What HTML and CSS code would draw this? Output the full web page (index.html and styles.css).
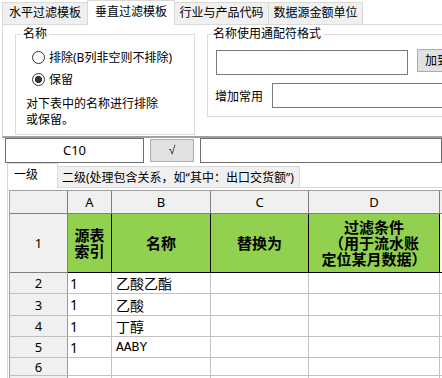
FILE: index.html
```html
<!DOCTYPE html>
<html lang="zh-CN">
<head>
<meta charset="utf-8">
<title>垂直过滤模板</title>
<link rel="stylesheet" href="styles.css">
</head>
<body>
<div class="app">
  <div class="tabstrip">
    <div class="tab t1">水平过滤模板</div>
    <div class="tab t2 active">垂直过滤模板</div>
    <div class="tab t3">行业与产品代码</div>
    <div class="tab t4">数据源金额单位</div>
  </div>
  <div class="panel">
    <fieldset class="grp grp-name">
      <legend class="lg1">名称</legend>
      <div class="radios">
        <div class="radio"><span class="rb"></span>排除(B列非空则不排除)</div>
        <div class="radio"><span class="rb on"></span>保留</div>
      </div>
      <p class="note">对下表中的名称进行排除<br>或保留。</p>
    </fieldset>
    <fieldset class="grp grp-wild">
      <legend class="lg2">名称使用通配符格式</legend>
      <div class="wrow1"><div class="input in1"></div><div class="btn addbtn">加到常用</div></div>
      <div class="wrow2"><span class="lbl">增加常用</span><div class="input in2"></div></div>
    </fieldset>
  </div>
  <div class="fbar">
    <div class="namebox">C10</div>
    <div class="btn okbtn">√</div>
    <div class="formula"></div>
  </div>
  <div class="stabs">
    <div class="stab active">一级</div>
    <div class="stab s2">二级(处理包含关系，如“其中：出口交货额”)</div>
  </div>
  <div class="sheet-body">
    <div class="grid">
      <div class="c ch"></div><div class="c ch">A</div><div class="c ch">B</div><div class="c ch">C</div><div class="c ch">D</div><div class="c ch"></div>
      <div class="c rh rh1">1</div><div class="c g">源表<br>索引</div><div class="c g">名称</div><div class="c g">替换为</div><div class="c g">过滤条件<br>（用于流水账<br>定位某月数据）</div><div class="c ge"></div>
      <div class="c rh">2</div><div class="c">1</div><div class="c b">乙酸乙酯</div><div class="c"></div><div class="c"></div><div class="c"></div>
      <div class="c rh">3</div><div class="c">1</div><div class="c b">乙酸</div><div class="c"></div><div class="c"></div><div class="c"></div>
      <div class="c rh">4</div><div class="c">1</div><div class="c b">丁醇</div><div class="c"></div><div class="c"></div><div class="c"></div>
      <div class="c rh">5</div><div class="c">1</div><div class="c b mono">AABY</div><div class="c"></div><div class="c"></div><div class="c"></div>
      <div class="c rh">6</div><div class="c"></div><div class="c b"></div><div class="c"></div><div class="c"></div><div class="c"></div>
      <div class="c rh"></div><div class="c"></div><div class="c b"></div><div class="c"></div><div class="c"></div><div class="c"></div>
    </div>
  </div>
</div>
</body>
</html>
```
FILE: styles.css
```css
* { box-sizing: border-box; }
html, body { margin: 0; padding: 0; background: #fff; }
body {
  font-family: "Noto Sans", "Noto Sans CJK SC", sans-serif;
  font-size: 12px;
  color: #000;
}
.app { width: 442px; height: 378px; overflow: hidden; }

/* top tabs */
.tabstrip { display: flex; align-items: flex-end; height: 24px; padding-left: 2px; }
.tab {
  height: 22px;
  line-height: 20px;
  border: 1px solid #d9d9d9;
  border-bottom: none;
  background: #f0f0f0;
  text-align: center;
  white-space: nowrap;
  flex: none;
}
.t1 { width: 86px; }
.t2 { width: 88px; margin-left: -1px; }
.t3 { width: 95px; margin-left: -1px; }
.t4 { width: 95px; margin-left: -1px; }
.tab.active {
  height: 25px;
  margin-bottom: -1px;
  line-height: 21px;
  background: #fff;
  position: relative;
  z-index: 1;
}

/* panel */
.panel {
  margin-left: 2px;
  height: 114px;
  border-top: 1px solid #d9d9d9;
  border-left: 1px solid #d9d9d9;
  border-bottom: 2px solid #a0a0a0;
  display: flex;
  align-items: flex-start;
  gap: 12px;
  padding: 2px 0 0 12px;
}
.grp {
  margin: 0;
  padding: 0;
  border: 1px solid #dcdcdc;
  min-width: 0;
  flex: none;
}
.grp legend { padding: 0 2px; line-height: 14px; }
.lg1 { margin-left: 5px; }
.lg2 { margin-left: 3px; }
.grp-name { width: 180px; height: 108px; }
.grp-wild { width: 280px; height: 90px; }

.radios { padding: 5px 0 0 16px; }
.radio { display: flex; align-items: center; height: 22px; white-space: nowrap; }
.rb {
  width: 13px; height: 13px;
  border: 1px solid #333;
  border-radius: 50%;
  margin-right: 4px;
  background: #fff;
  flex: none;
}
.rb.on { background: radial-gradient(circle, #333 0 3.3px, #fff 3.9px); }
.note { margin: 6px 0 0 10px; line-height: 16px; }

.wrow1 { display: flex; align-items: flex-start; margin: 9px 0 0 8px; }
.input { height: 25px; border: 1px solid #7a7a7a; background: #fff; flex: none; }
.in1 { width: 192px; }
.btn { background: #e1e1e1; border: 1px solid #adadad; white-space: nowrap; flex: none; }
.addbtn { margin: -1px 0 0 9px; width: 75px; height: 23px; line-height: 21px; padding-left: 7px; }
.wrow2 { display: flex; align-items: center; margin: 8px 0 0 7px; }
.lbl { width: 48px; white-space: nowrap; }
.in2 { margin-left: 9px; width: 220px; }

/* formula bar */
.fbar { display: flex; align-items: flex-start; height: 25px; padding-left: 5px; }
.namebox {
  width: 139px; height: 25px;
  border: 1px solid #6e6e6e;
  text-align: center;
  line-height: 23px;
  font-size: 13px;
  flex: none;
}
.okbtn {
  width: 44px; height: 23px;
  margin: 1px 0 0 6px;
  text-align: center;
  line-height: 21px;
  font-family: "Liberation Sans", sans-serif;
  font-size: 12px;
  color: #222;
}
.formula { flex: 1; margin-left: 6px; height: 25px; border: 1px solid #6e6e6e; }

/* sheet tabs */
.stabs { display: flex; align-items: flex-end; height: 24px; padding-left: 7px; }
.stab {
  height: 21px;
  border: 1px solid #d9d9d9;
  border-bottom: none;
  background: #f0f0f0;
  line-height: 22px;
  white-space: nowrap;
  flex: none;
}
.stab.active {
  width: 51px;
  height: 25px;
  margin-bottom: -1px;
  background: #fff;
  padding-left: 6px;
  line-height: 22px;
  position: relative;
  z-index: 1;
}
.s2 { width: 243px; margin-left: -1px; padding-left: 4px; }

/* sheet */
.sheet-body {
  margin-left: 7px;
  border-top: 1px solid #d9d9d9;
  border-left: 1px solid #d9d9d9;
  padding: 2px 0 0 1px;
}
.grid {
  display: grid;
  grid-template-columns: 58px 44px 99px 98px 131px 80px;
  grid-template-rows: 23px 59px 21px 22px 21px 21px 18px 21px;
  border-top: 1px solid #a0a0a0;
  border-left: 1px solid #a0a0a0;
  font-family: "Noto Sans", "Noto Sans CJK SC", sans-serif;
}
.c {
  border-right: 1px solid #c0c0c0;
  border-bottom: 1px solid #c0c0c0;
  display: flex;
  align-items: center;
  padding-left: 2px;
  font-size: 14px;
  white-space: nowrap;
  overflow: hidden;
}
.c.b { padding-left: 4px; }
.ch {
  background: #f0f0f0;
  border-right-color: #808080;
  border-bottom-color: #808080;
  justify-content: center;
  padding-left: 0;
  font-size: 13px;
}
.rh {
  background: #f0f0f0;
  border-right-color: #9a9a9a;
  justify-content: center;
  padding-left: 0;
  font-size: 13px;
}
.rh1 { border-bottom-color: #808080; border-right-color: #808080; }
.g {
  background: #92d050;
  border-right-color: #000;
  border-bottom-color: #000;
  justify-content: center;
  text-align: center;
  padding-left: 0;
  font-family: "Noto Sans CJK SC", sans-serif;
  font-weight: bold;
  font-size: 15px;
  line-height: 16px;
}
.ge { border-bottom-color: #000; }
.mono { font-family: "Liberation Mono", monospace; font-size: 13px; }
```
